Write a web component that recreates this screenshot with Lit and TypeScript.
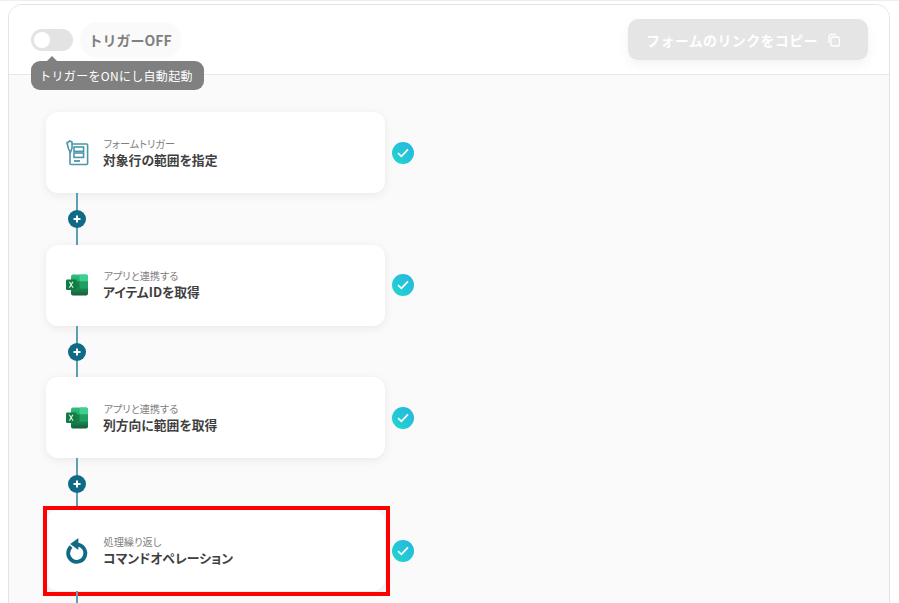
import { LitElement, html, css, svg } from "lit";
import { customElement } from "lit/decorators.js";

const formIcon = svg`<svg class="ico" viewBox="0 0 23 26" width="23" height="26" fill="none" stroke="#4a97ab" stroke-width="1.6">
  <rect x="4" y="4" width="17.6" height="20.5" rx="1"/>
  <rect x="8" y="7" width="9.6" height="4.4"/>
  <rect x="8" y="13" width="9.6" height="4.4"/>
  <path d="M8 21h6" stroke="#2f7f96"/>
  <path d="M1 3 L3.8 1 L6 2 L6 8 L4.4 12.5 L2.6 9 Z" fill="#fff"/>
</svg>`;

const excelIcon = svg`<svg class="ico" viewBox="0 0 22 22" width="22" height="22">
  <defs>
    <linearGradient id="xg" x1="0" y1="0" x2="0" y2="1">
      <stop offset="0" stop-color="#2fc07c"/>
      <stop offset=".5" stop-color="#1f9c5e"/>
      <stop offset="1" stop-color="#175c38"/>
    </linearGradient>
  </defs>
  <rect x="5" y="0.5" width="17" height="21" rx="2" fill="url(#xg)"/>
  <rect x="13.5" y="0.5" width="8.5" height="7" rx="1.5" fill="#3fd08d"/>
  <rect x="13.5" y="7.5" width="8.5" height="7" fill="#1f9f62"/>
  <rect x="5" y="7.5" width="8.5" height="7" fill="#15804a"/>
  <rect x="0" y="5.5" width="10.5" height="10.5" rx="1.2" fill="#107c41"/>
  <path d="M2.8 7.8l1.7 3-1.7 3h1.2l1.2-2.1 1.2 2.1h1.2l-1.8-3 1.7-3H6.1L5.2 9.8 4 7.8z" fill="#e9f7ef"/>
</svg>`;

const loopIcon = svg`<svg class="ico" viewBox="0 1 24 28" width="24" height="28" fill="none">
  <path d="M6.2 10.6 A8.6 8.6 0 1 0 12 8.6" stroke="#0f6a85" stroke-width="3.8"/>
  <path d="M13.4 2 L13.4 14 L5.2 8 Z" fill="#0f6a85"/>
</svg>`;

const steps = [
  { icon: formIcon, small: "フォームトリガー", title: "対象行の範囲を指定" },
  { icon: excelIcon, small: "アプリと連携する", title: "アイテムIDを取得" },
  { icon: excelIcon, small: "アプリと連携する", title: "列方向に範囲を取得" },
  { icon: loopIcon, small: "処理繰り返し", title: "コマンドオペレーション", marked: true },
];

@customElement("app-root")
export class AppRoot extends LitElement {
  static styles = css`
    :host {
      display: block;
      width: 899px;
      height: 603px;
      overflow: hidden;
      background: #fff;
      font-family: "Noto Sans CJK JP", "Noto Sans", sans-serif;
      box-sizing: border-box;
      padding: 3px 8px 0;
      border-top: 1px solid #eeeeee;
    }
    .panel {
      box-sizing: border-box;
      width: 882px;
      height: 620px;
      border: 1px solid #e3e3e3;
      border-radius: 14px;
      background: #fafafa;
      overflow: hidden;
    }
    .head {
      position: relative;
      box-sizing: border-box;
      height: 70px;
      background: #fff;
      border-bottom: 1px solid #e8e8e8;
      display: flex;
      align-items: flex-start;
      justify-content: space-between;
      padding: 14px 21px 0 22px;
    }
    .left { display: flex; align-items: center; gap: 7px; padding-top: 3px; }
    .toggle {
      box-sizing: border-box;
      width: 42px;
      height: 22px;
      border-radius: 11px;
      background: #e3e3e3;
      padding: 3px;
      display: flex;
    }
    .knob { width: 16px; height: 16px; border-radius: 50%; background: #fff; }
    .pill {
      box-sizing: border-box;
      height: 36px;
      width: 102px;
      padding-right: 2px;
      border-radius: 18px;
      background: #fafafa;
      display: flex;
      align-items: center;
      justify-content: center;
      font-size: 14px;
      font-weight: 700;
      color: #808080;
      white-space: nowrap;
    }
    .tip {
      position: absolute;
      left: 22px;
      top: 56px;
      box-sizing: border-box;
      width: 173px;
      height: 29px;
      padding-right: 3px;
      background: #808080;
      color: #fff;
      border-radius: 9px;
      font-size: 12px;
      letter-spacing: 0.3px;
      display: flex;
      align-items: center;
      justify-content: center;
      white-space: nowrap;
      z-index: 2;
    }
    .tip::before {
      content: "";
      position: absolute;
      left: 16px;
      top: -5px;
      border-left: 5px solid transparent;
      border-right: 5px solid transparent;
      border-bottom: 5px solid #808080;
    }
    .copy {
      box-sizing: border-box;
      width: 240px;
      height: 41px;
      border-radius: 10px;
      background: #e5e5e5;
      box-shadow: 0 4px 12px rgba(0, 0, 0, 0.05);
      color: #fff;
      font-size: 14px;
      font-weight: 700;
      letter-spacing: 0.35px;
      display: flex;
      align-items: center;
      justify-content: center;
      gap: 9px;
      padding-right: 9px;
      white-space: nowrap;
    }
    .flow {
      display: flex;
      flex-direction: column;
      padding: 37px 0 0 37px;
    }
    .row { display: flex; align-items: center; gap: 7px; position: relative; }
    .card {
      box-sizing: border-box;
      width: 339px;
      height: 81px;
      background: #fff;
      border-radius: 12px;
      box-shadow: 0 2px 10px rgba(0, 0, 0, 0.07);
      display: flex;
      align-items: center;
      padding-left: 18px;
      gap: 13px;
    }
    .ico-wrap { width: 26px; display: flex; justify-content: center; }
    .texts { display: flex; flex-direction: column; font-feature-settings: "palt"; }
    .small { font-size: 10.2px; line-height: 14px; color: #808080; margin-left: 0.5px; }
    .title { font-size: 12.8px; line-height: 18px; font-weight: 700; color: #3f3f3f; }
    .check {
      width: 22px;
      height: 22px;
      border-radius: 50%;
      background: linear-gradient(45deg, #20d8cc, #26b4e2);
      display: flex;
      align-items: center;
      justify-content: center;
    }
    .link {
      position: relative;
      width: 2px;
      height: 51.7px;
      margin-left: 30px;
      background: #5f9fb3;
      display: flex;
      align-items: center;
      justify-content: center;
      flex: none;
    }
    .plus {
      flex: none;
      width: 18px;
      height: 18px;
      border-radius: 50%;
      background: #0f6a85;
      display: flex;
      align-items: center;
      justify-content: center;
    }
    .mark {
      position: absolute;
      left: -3px;
      top: -4.1px;
      width: 347px;
      height: 90px;
      box-sizing: border-box;
      border: 4px solid #ff0000;
      pointer-events: none;
    }
  `;

  render() {
    return html`
      <div class="panel">
        <div class="head">
          <div class="left">
            <div class="toggle"><div class="knob"></div></div>
            <div class="pill">トリガーOFF</div>
          </div>
          <div class="tip">トリガーをONにし自動起動</div>
          <div class="copy">
            フォームのリンクをコピー
            <svg viewBox="0 0 14 14" width="14" height="14" fill="none" stroke="#fff" stroke-width="1.3">
              <rect x="4" y="4" width="8.5" height="9" rx="2"/>
              <path d="M2 10V3.5A2 2 0 0 1 4 1.5h5"/>
            </svg>
          </div>
        </div>
        <div class="flow">
          ${steps.map(
            (s, i) => html`
              ${i > 0 ? this.connector() : ""}
              <div class="row">
                <div class="card">
                  <div class="ico-wrap">${s.icon}</div>
                  <div class="texts">
                    <div class="small">${s.small}</div>
                    <div class="title">${s.title}</div>
                  </div>
                </div>
                <div class="check">
                  <svg viewBox="0 0 12 10" width="12" height="10" fill="none" stroke="#fff" stroke-width="1.7">
                    <path d="M1 5.2 4.4 8.4 11 1.4"/>
                  </svg>
                </div>
                ${s.marked ? html`<div class="mark"></div>` : ""}
              </div>
            `
          )}
          ${this.connector()}
        </div>
      </div>
    `;
  }

  connector() {
    return html`<div class="link">
      <div class="plus">
        <svg viewBox="0 0 10 10" width="10" height="10" fill="none" stroke="#fff" stroke-width="2">
          <path d="M5 1.5v7M1.5 5h7"/>
        </svg>
      </div>
    </div>`;
  }
}
